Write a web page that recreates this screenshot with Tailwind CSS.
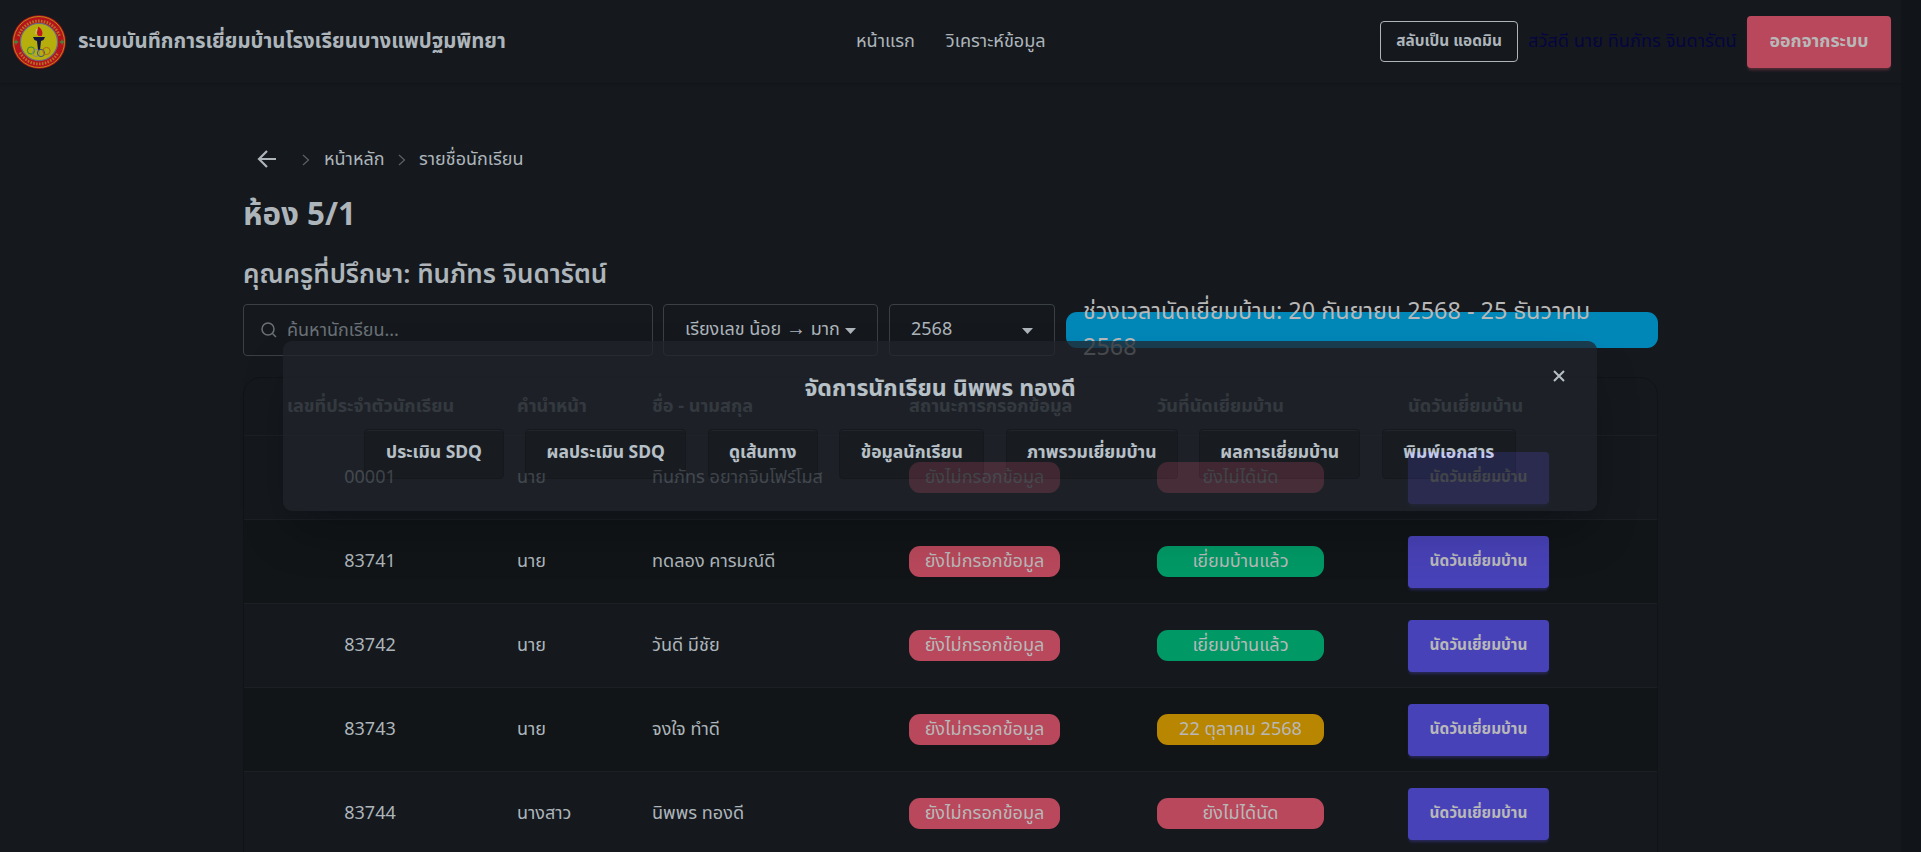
<!DOCTYPE html>
<html lang="th">
<head>
<meta charset="utf-8">
<title>ระบบบันทึกการเยี่ยมบ้าน</title>
<script src="https://cdn.jsdelivr.net/npm/@tailwindcss/browser@4"></script>
</head>
<body class="relative h-[852px] overflow-hidden bg-[#15191e] font-['Noto_Sans','Noto_Sans_Thai',sans-serif] text-[18px] leading-[27px] text-[#adb5bb]">
<nav class="flex h-[83px] w-[1905px] items-center pr-[14px] pl-3 shadow-sm">
  <div class="flex w-[844px] items-center gap-3">
    <svg class="h-[54px] w-[54px] shrink-0" viewBox="0 0 54 54">
      <circle cx="27" cy="27" r="26.8" fill="#b5121b"/>
      <circle cx="27" cy="27" r="25.5" fill="none" stroke="#b8a512" stroke-width=".8"/>
      <path d="M6.500 21A21.500 21.500 0 0 1 47.500 21M8 37.500A21.500 21.500 0 0 0 46 37.500" fill="none" stroke="#b8902a" stroke-width="2.800" stroke-dasharray="1.6 1.3" opacity=".75"/>
      <circle cx="27" cy="27" r="18.6" fill="#b5ae0c" stroke="#6d6a80" stroke-width="1.2"/>
      <path d="M4 24.500v5M1.700 27h4.600M50 24.500v5M47.700 27h4.600" stroke="#3d8c3d" stroke-width="1.300"/>
      <path d="M26.500 21c-3-3-.5-5-.3-9.500 3 2 5.500 5.500 3.600 9.500z" fill="#c3161c"/>
      <path d="M24 19c-1-2 1-3 .5-5" stroke="#c9c3c0" fill="none"/>
      <path d="M21 22h12l-1.500 3-2.500 1-1 9h-2l-1-9-2.500-1z" fill="#10143f"/>
      <g fill="none" stroke-width="1"><circle cx="19" cy="35.500" r="3.600" stroke="#2e8a3a"/><circle cx="24" cy="38" r="3.600" stroke="#8a8a90"/><circle cx="29" cy="38" r="3.600" stroke="#44507a"/><circle cx="34.500" cy="36" r="3.600" stroke="#b5651a"/></g>
    </svg>
    <span class="pb-[3px] text-[20.350px] font-bold whitespace-nowrap">ระบบบันทึกการเยี่ยมบ้านโรงเรียนบางแพปฐมพิทยา</span>
  </div>
  <div class="flex gap-[31px] pb-[3px] text-[18.100px] whitespace-nowrap"><a>หน้าแรก</a><a>วิเคราะห์ข้อมูล</a></div>
  <div class="ml-auto flex items-center gap-[10px] whitespace-nowrap">
    <button class="h-[41px] w-[138px] rounded border border-[#adb5bb] pb-[2px] text-[15.400px] font-bold">สลับเป็น แอดมิน</button>
    <span class="w-[209px] pb-[3px] text-[18.200px] text-[#05053f]">สวัสดี นาย ทินภัทร จินดารัตน์</span>
    <button class="mt-px h-[52px] w-[144px] rounded bg-[#b9485c] pb-[3px] text-[17.800px] font-bold text-[#b8b8b8] shadow-[0_3px_3px_-1px_#b9485c66]">ออกจากระบบ</button>
  </div>
</nav>
<main class="ml-[243px] w-[1415px]">
  <div class="box-content flex h-[54px] items-center pt-[49px]">
    <svg class="ml-[14px] h-[18px] w-[20px]" viewBox="0 0 20 18" fill="none" stroke="#adb5bb" stroke-width="2.200"><path d="M19 9H2M10 1L2 9l8 8"/></svg>
    <svg class="mt-[2px] ml-[25px] h-3 w-2" viewBox="0 0 8 12" fill="none" stroke="#5b6167" stroke-width="1.200"><path d="M1 1l5.500 5L1 11"/></svg>
    <span class="ml-[14px] w-[62px] pb-[2px]">หน้าหลัก</span>
    <svg class="mt-[2px] ml-[12px] h-3 w-2" viewBox="0 0 8 12" fill="none" stroke="#5b6167" stroke-width="1.200"><path d="M1 1l5.500 5L1 11"/></svg>
    <span class="ml-[13px] pb-[2px]">รายชื่อนักเรียน</span>
  </div>
  <h1 class="mt-[6px] text-[31.300px] leading-[42px] font-bold">ห้อง 5/1</h1>
  <h2 class="mt-[19px] text-[26px] leading-[40px] font-semibold">คุณครูที่ปรึกษา: ทินภัทร จินดารัตน์</h2>
  <div class="mt-[11px] flex items-center whitespace-nowrap">
    <div class="flex h-[52px] w-[410px] items-center rounded border border-[#3b4045] pl-[17px] text-[#6b7177]">
      <svg class="h-4 w-4" viewBox="0 0 16 16" fill="none" stroke="#6b7177" stroke-width="1.500"><circle cx="7" cy="7" r="6"/><path d="M11.500 11.500l3.500 3.500"/></svg>
      <span class="ml-[10px] pb-[2px]">ค้นหานักเรียน...</span>
    </div>
    <div class="ml-[10px] flex h-[52px] w-[215px] items-center justify-between rounded border border-[#3b4045] pr-[21px] pl-[21px]"><span class="pb-[4px]">เรียงเลข น้อย <span class="text-[20px] leading-none">→</span> มาก</span><svg class="mt-[2px] h-[6px] w-[11px]" viewBox="0 0 11 6"><path d="M0 0h11L5.500 6z" fill="#adb5bb"/></svg></div>
    <div class="ml-[11px] flex h-[52px] w-[166px] items-center justify-between rounded border border-[#3b4045] pr-[21px] pl-[21px]"><span class="pb-[4px]">2568</span><svg class="mt-[2px] h-[6px] w-[11px]" viewBox="0 0 11 6"><path d="M0 0h11L5.500 6z" fill="#adb5bb"/></svg></div>
    <div class="ml-[11px] flex h-[36px] w-[592px] items-center rounded-[11px] bg-[#0087b8] px-[17px] pb-[5px] text-[23.400px] leading-[36px] text-[#b8b8b8]"><span>ช่วงเวลานัดเยี่ยมบ้าน: 20 กันยายน 2568 - 25 ธันวาคม<br>2568</span></div>
  </div>
  <section id="students" class="mt-[21px] h-[500px] rounded-t-[18px] border border-[#101317] whitespace-nowrap">
    <div class="grid h-[58px] grid-cols-[273px_135px_257px_248px_251px_1fr] items-center border-b border-[#1c2025] pb-[3px] text-[18.100px] font-bold text-[#71797e]">
      <span class="w-[253px] text-center">เลขที่ประจำตัวนักเรียน</span><span>คำนำหน้า</span><span>ชื่อ - นามสกุล</span><span>สถานะการกรอกข้อมูล</span><span>วันที่นัดเยี่ยมบ้าน</span><span>นัดวันเยี่ยมบ้าน</span>
    </div>
  </section>
</main>
<template id="row">
  <div class="grid h-[84px] grid-cols-[273px_135px_257px_248px_251px_1fr] items-center border-b border-[#1c2025] even:bg-[#15191e] odd:bg-[#111518]">
    <span class="w-[252px] pb-[3px] text-center"></span><span class="pb-[3px]"></span><span class="pb-[3px] text-[18.100px]"></span>
    <span class="h-[31px] w-[151px] rounded-[11px] bg-[#b9485c] text-center text-[18.100px] leading-[28px] text-[#b8b8b8]">ยังไม่กรอกข้อมูล</span>
    <span class="h-[31px] w-[167px] rounded-[11px] text-center text-[18.100px] leading-[28px] text-[#b8b8b8]"></span>
    <button class="h-[52px] w-[141px] rounded bg-[#4842b8] pb-[2px] text-[15.400px] font-bold text-[#b8b8b8] shadow-[0_3px_3px_-1px_#4842b866]">นัดวันเยี่ยมบ้าน</button>
  </div>
</template>
<div class="absolute top-0 right-0 h-full w-5 bg-[#111519]"></div>
<dialog open class="absolute top-[341px] left-[283px] m-0 h-[170px] w-[1314px] rounded-[9px] bg-[#20242b] text-[#edf8ff] opacity-75 shadow-[0_25px_50px_-12px_rgba(0,0,0,.4)]">
  <svg class="absolute top-[29px] right-[32px] h-3 w-3" viewBox="0 0 12 12" stroke="#edf8ff" stroke-width="2"><path d="M1 1l10 10M11 1L1 11"/></svg>
  <h3 class="mt-[28px] text-center text-[23.100px] leading-[36px] font-bold">จัดการนักเรียน นิพพร ทองดี</h3>
  <div class="mt-[24px] flex justify-center gap-[21.500px] text-[17.500px] font-bold whitespace-nowrap">
    <button class="h-[50px] w-[139.500px] rounded border border-[#16191e] bg-[#191d23] pb-[5px] inset-shadow-[0_1px_0_#262a31]">ประเมิน SDQ</button>
    <button class="h-[50px] w-[161px] rounded border border-[#16191e] bg-[#191d23] pb-[5px] inset-shadow-[0_1px_0_#262a31]">ผลประเมิน SDQ</button>
    <button class="h-[50px] w-[110px] rounded border border-[#16191e] bg-[#191d23] pb-[5px] inset-shadow-[0_1px_0_#262a31]">ดูเส้นทาง</button>
    <button class="h-[50px] w-[145px] rounded border border-[#16191e] bg-[#191d23] pb-[5px] inset-shadow-[0_1px_0_#262a31]">ข้อมูลนักเรียน</button>
    <button class="h-[50px] w-[172px] rounded border border-[#16191e] bg-[#191d23] pb-[5px] inset-shadow-[0_1px_0_#262a31]">ภาพรวมเยี่ยมบ้าน</button>
    <button class="h-[50px] w-[161px] rounded border border-[#16191e] bg-[#191d23] pb-[5px] inset-shadow-[0_1px_0_#262a31]">ผลการเยี่ยมบ้าน</button>
    <button class="h-[50px] w-[134px] rounded border border-[#16191e] bg-[#191d23] pb-[5px] inset-shadow-[0_1px_0_#262a31]">พิมพ์เอกสาร</button>
  </div>
</dialog>
<script>
const tones = { red: 'bg-[#b9485c]', green: 'bg-[#009966]', amber: 'bg-[#b88600]' };
const rows = [
  ['00001', 'นาย', 'ทินภัทร อยากจิบโฟร์โมส', 'ยังไม่ได้นัด', 'red'],
  ['83741', 'นาย', 'ทดลอง คารมณ์ดี', 'เยี่ยมบ้านแล้ว', 'green'],
  ['83742', 'นาย', 'วันดี มีชัย', 'เยี่ยมบ้านแล้ว', 'green'],
  ['83743', 'นาย', 'จงใจ ทำดี', '22 ตุลาคม 2568', 'amber'],
  ['83744', 'นางสาว', 'นิพพร ทองดี', 'ยังไม่ได้นัด', 'red'],
];
for (const r of rows) {
  const n = document.getElementById('row').content.firstElementChild.cloneNode(true);
  [0, 1, 2].forEach(i => n.children[i].textContent = r[i]);
  n.children[4].textContent = r[3];
  n.children[4].classList.add(tones[r[4]]);
  document.getElementById('students').append(n);
}
</script>
</body>
</html>
